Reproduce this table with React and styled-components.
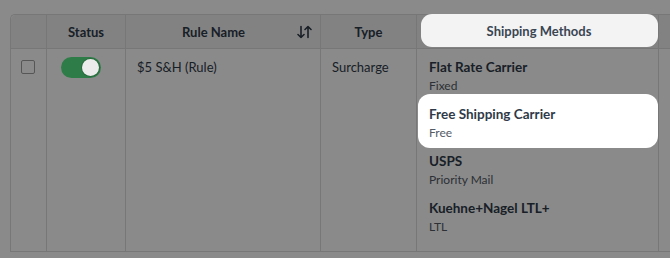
import React from "react";
import styled, { createGlobalStyle } from "styled-components";

const Global = createGlobalStyle`
  html, body { margin: 0; padding: 0; background: #ffffff; overflow: hidden; }
  body { font-family: Lato, "Open Sans", Arial, sans-serif; color: #2f3a48; }
  * { box-sizing: border-box; }
`;

const Page = styled.div`
  width: 670px;
  height: 258px;
  padding: 14px 0 0 10px;
  overflow: hidden;
`;

const Grid = styled.div`
  width: 720px;
  display: grid;
  grid-template-columns: 36px 79px 195px 96px 242px 1fr;
  grid-template-rows: 34px 203px;
  border-top: 1px solid #dcdcdc;
  border-left: 1px solid #dcdcdc;
  border-radius: 5px 0 0 0;
`;

const HeadCell = styled.div`
  background: #f1f1f2;
  border-right: 1px solid #dcdcdc;
  border-bottom: 1px solid #dcdcdc;
  display: flex;
  align-items: center;
  justify-content: ${(p) => (p.$between ? "space-between" : "center")};
  padding: ${(p) => (p.$between ? "0 8px 0 56px" : "0")};
  font-size: 13px;
  font-weight: 700;
  color: #2f3a48;
  &:first-child { border-top-left-radius: 5px; }
`;

const HeadSpot = styled.div`
  position: relative;
  z-index: 2;
  align-self: flex-start;
  margin: -1px 0 0 3px;
  width: 237px;
  height: 33px;
  border-radius: 11px;
  background: #f3f3f4;
  display: flex;
  align-items: center;
  justify-content: center;
  font-size: 13px;
  font-weight: 700;
  color: #3a4552;
`;

const Cell = styled.div`
  border-right: 1px solid #dcdcdc;
  border-bottom: 1px solid #dcdcdc;
  padding: ${(p) => p.$pad || "0"};
  font-size: 13px;
  line-height: 18px;
  color: #2f3a48;
  display: flex;
  flex-direction: column;
  align-items: ${(p) => p.$align || "stretch"};
`;

const Check = styled.div`
  width: 14px;
  height: 14px;
  border: 1.5px solid #a0a0a0;
  border-radius: 2px;
  background: #ffffff;
  margin-left: -1px;
`;

const Toggle = styled.div`
  position: relative;
  z-index: 2;
  width: 40px;
  height: 21px;
  border-radius: 11px;
  background: #2e7d48;
  display: flex;
  align-items: center;
  justify-content: flex-end;
  padding-right: 2px;
`;

const Knob = styled.div`
  width: 17px;
  height: 17px;
  border-radius: 50%;
  background: #ececec;
  box-shadow: 0 0 0 1px #2a6a3e;
`;

const Method = styled.div`
  position: relative;
  z-index: ${(p) => (p.$spot ? 2 : "auto")};
  padding: 9px 12px 1px 12px;
  &::before {
    content: "";
    display: ${(p) => (p.$spot ? "block" : "none")};
    position: absolute;
    top: -2px;
    bottom: -5px;
    left: 1px;
    right: 0;
    background: #ffffff;
    border-radius: 12px;
    z-index: -1;
  }
`;

const MTitle = styled.div`
  font-size: 13.5px;
  line-height: 18px;
  font-weight: 700;
  color: #2f3a48;
`;

const MSub = styled.div`
  margin-top: 1px;
  font-size: 12px;
  line-height: 18px;
  color: #535b65;
`;

const Overlay = styled.div`
  position: fixed;
  inset: 0;
  background: rgba(0, 0, 0, 0.46);
  z-index: 1;
  pointer-events: none;
`;

const SortIcon = () => (
  <svg width="15" height="14" viewBox="0 0 15 14" fill="none" stroke="#2f3a48" strokeWidth="1.6" strokeLinecap="round" strokeLinejoin="round">
    <path d="M4 1.5v11M1 9.5l3 3 3-3" />
    <path d="M11 12.5v-11M8 4.5l3-3 3 3" />
  </svg>
);

const methods = [
  { t: "Flat Rate Carrier", s: "Fixed" },
  { t: "Free Shipping Carrier", s: "Free", spot: true },
  { t: "USPS", s: "Priority Mail" },
  { t: "Kuehne+Nagel LTL+", s: "LTL" },
];

export default function App() {
  return (
    <>
      <Global />
      <Page>
        <Grid>
          <HeadCell />
          <HeadCell>Status</HeadCell>
          <HeadCell $between>
            <span>Rule Name</span>
            <SortIcon />
          </HeadCell>
          <HeadCell>Type</HeadCell>
          <HeadCell>
            <HeadSpot>Shipping Methods</HeadSpot>
          </HeadCell>
          <HeadCell />

          <Cell $pad="11px 0 0 0" $align="center">
            <Check />
          </Cell>
          <Cell $pad="8px 0 0 14px" $align="flex-start">
            <Toggle>
              <Knob />
            </Toggle>
          </Cell>
          <Cell $pad="9px 0 0 11px">$5 S&amp;H (Rule)</Cell>
          <Cell $pad="9px 0 0 11px">Surcharge</Cell>
          <Cell>
            {methods.map((m) => (
              <Method key={m.t} $spot={m.spot}>
                <MTitle>{m.t}</MTitle>
                <MSub>{m.s}</MSub>
              </Method>
            ))}
          </Cell>
          <Cell />
        </Grid>
      </Page>
      <Overlay />
    </>
  );
}
